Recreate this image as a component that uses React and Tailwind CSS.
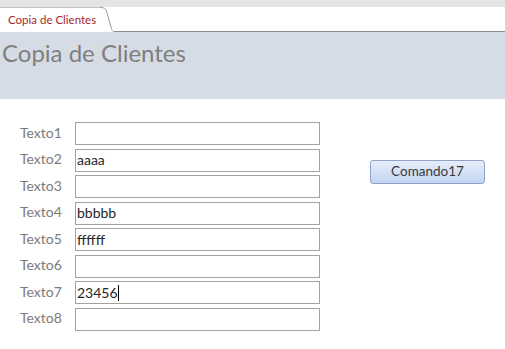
import React from 'react';

const rows = [
  { label: 'Texto1', value: '' },
  { label: 'Texto2', value: 'aaaa' },
  { label: 'Texto3', value: '' },
  { label: 'Texto4', value: 'bbbbb' },
  { label: 'Texto5', value: 'ffffff' },
  { label: 'Texto6', value: '' },
  { label: 'Texto7', value: '23456', focused: true },
  { label: 'Texto8', value: '' },
];

const font = { fontFamily: 'Lato, "Open Sans", sans-serif' };

const FieldRow = ({ label, value, focused }) => (
  <div className="flex items-center h-[23px]">
    <div className="w-[55px] text-[14px] text-[#7b7b7b] leading-none -mt-[2px]">{label}</div>
    <div className="w-[245px] h-[23px] border border-[#a3a3a3] bg-white flex items-center pl-[1px]">
      <span className="text-[14px] text-[#262626] leading-none">{value}</span>
      {focused && <span className="w-px h-[16px] bg-black" />}
    </div>
  </div>
);

export default function App() {
  return (
    <div className="w-[505px] h-[349px] bg-white overflow-hidden" style={font}>
      {/* top strip */}
      <div className="h-[7px] bg-[#e4e4e4]" />

      {/* tab bar */}
      <div className="flex h-[25px]">
        <div className="w-[100px] border-t border-[#c4c4c4] bg-white flex items-center pl-[8px]">
          <span className="text-[11.5px] text-[#a8262c] leading-none">Copia de Clientes</span>
        </div>
        <svg width="14" height="25" viewBox="0 0 14 25" className="shrink-0">
          <path d="M0 0.5 C4 0.5 5 1 6.5 4 L11 20 C12 23.5 12.5 24.5 14 24.5" fill="white" stroke="#9a9a9a" strokeWidth="1" />
        </svg>
        <div className="flex-1 border-b border-[#8c8c8c]" />
      </div>

      {/* header band */}
      <div className="h-[67px] bg-[#d6dce5] pl-[2px] pt-[6px]">
        <h1 className="text-[24px] text-[#7f7f7f] leading-tight">Copia de Clientes</h1>
      </div>

      {/* form body */}
      <div className="flex pt-[23px] pl-[20px]">
        <div className="flex flex-col gap-[3.57px]">
          {rows.map((r) => (
            <FieldRow key={r.label} {...r} />
          ))}
        </div>
        <div className="ml-[50px] mt-[36px]">
          <button className="w-[115px] h-[24px] rounded-[3px] border border-[#8ea3c9] bg-gradient-to-b from-[#e6edfb] to-[#c5d5f1] text-[13.5px] text-[#3a3a3a] leading-none">
            Comando17
          </button>
        </div>
      </div>
    </div>
  );
}
